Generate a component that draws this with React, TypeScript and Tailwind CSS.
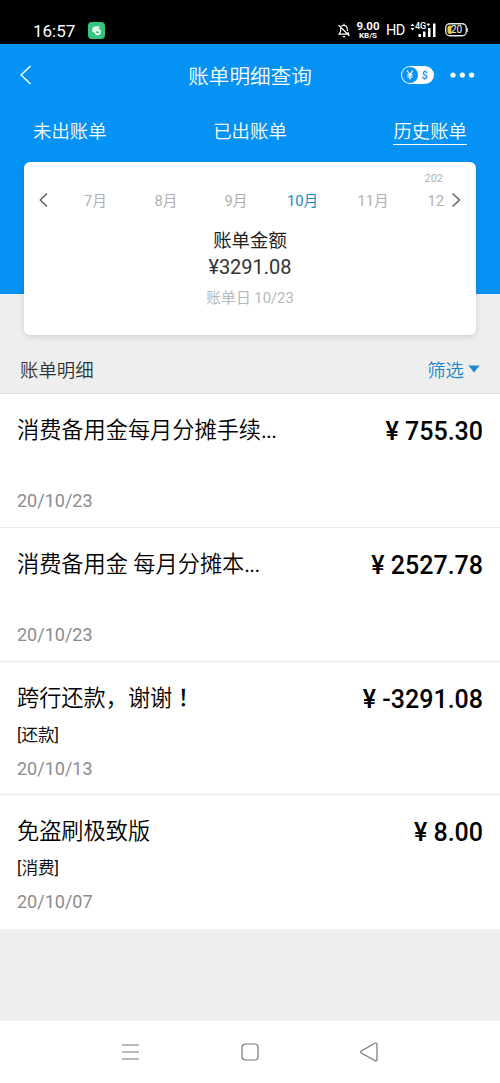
interface BillItem {
  title: string;
  mark?: string;
  amount: string;
  kind?: string;
  date: string;
}

const TABS = ['未出账单', '已出账单', '历史账单'];

const ITEMS: BillItem[] = [
  { title: '消费备用金每月分摊手续', mark: '...', amount: '755.30', date: '20/10/23' },
  { title: '消费备用金 每月分摊本', mark: '...', amount: '2527.78', date: '20/10/23' },
  { title: '跨行还款，谢谢', mark: '！', amount: '-3291.08', kind: '[还款]', date: '20/10/13' },
  { title: '免盗刷极致版', amount: '8.00', kind: '[消费]', date: '20/10/07' },
];

function StatusBar() {
  return (
    <div className="flex h-11 items-end justify-between bg-black pr-8 pl-[33px] text-white">
      <div className="mb-1 flex h-5 items-center gap-3">
        <span className="w-[43px] pt-px text-[17px] leading-5">16:57</span>
        <svg width="17" height="17" viewBox="0 0 17 17">
          <rect width="17" height="17" rx="4" fill="#35c57c" />
          <path d="M4.4 10.2V7.5Q4.4 4.6 7.3 4.6H12L10.6 6.4H8.5Q6.4 7.2 6.2 10.2Z" fill="#fff" />
          <circle cx="9.6" cy="10" r="2.4" fill="none" stroke="#fff" strokeWidth="1.6" />
          <path d="M9.4 10L11 8.4" stroke="#fff" strokeWidth="1" />
        </svg>
      </div>
      <div className="mb-1 flex h-5 items-center">
        <svg width="12" height="15" viewBox="0 0 12 15" fill="none" stroke="#fff" strokeWidth="1.2" strokeLinecap="round">
          <path d="M6 1V2.2M3.8 3Q6 1.4 8.3 3.3Q9.4 4.5 9.4 7.5M2.6 5V8.5L1 11.2H9.5M10.8 11L10 9.5M1 2.5L11 12.5M5.2 13.7H6.8" />
        </svg>
        <div className="ml-1.5 flex w-6 flex-col items-center pt-[2px] font-bold">
          <span className="text-[11.5px] leading-[9px]">9.00</span>
          <span className="text-[8px] leading-[9px]">KB/S</span>
        </div>
        <span className="ml-[6px] w-[18px] pt-px text-[14.5px] leading-5 tracking-[-0.5px]">HD</span>
        <div className="relative ml-[6px] h-4 w-[27px]">
          <span className="absolute top-0 left-[5px] text-[9px] leading-[9px] font-medium">4G</span>
          <svg className="absolute inset-0" width="27" height="16" viewBox="0 0 27 16" fill="#fff">
            <path d="M0.5 4L2.5 1.5L4.5 4ZM0.5 6L2.5 8.5L4.5 6Z" />
            <path d="M16.8 2.5H19.8M18.3 1V4" stroke="#fff" strokeWidth="1" />
            <rect x="8.5" y="12" width="2.5" height="3" />
            <rect x="13" y="9.5" width="2.5" height="5.5" />
            <rect x="18" y="6" width="2.5" height="9" />
            <rect x="23" y="1.5" width="2.5" height="13.5" />
          </svg>
        </div>
        <svg className="ml-2" width="23" height="14" viewBox="0 0 23 14">
          <rect x="0.75" y="0.75" width="20.5" height="12" rx="4" fill="none" stroke="#e8e8e8" strokeWidth="1.3" />
          <path d="M22.3 5V9" stroke="#e8e8e8" strokeWidth="1" />
          <path d="M5 2.5H6.5V11H5Q2.5 11 2.5 8.5V5Q2.5 2.5 5 2.5Z" fill="#f5c842" />
          <text x="11.5" y="10.3" fontSize="10" fill="#fff" textAnchor="middle">20</text>
        </svg>
      </div>
    </div>
  );
}

function Header() {
  return (
    <header className="h-[250px] bg-[#0492f4] text-white">
      <div className="flex h-[62px] items-center pr-[26px] pl-5">
        <div className="flex-1">
          <svg width="12" height="20" viewBox="0 0 12 20" fill="none" stroke="#fff" strokeWidth="1.5">
            <path d="M10.5 1L1 10L10.5 19" />
          </svg>
        </div>
        <h1 className="mr-[-6px] pt-[3px] text-[20.6px] leading-7 font-[350]">账单明细查询</h1>
        <div className="flex flex-1 items-center justify-end gap-4">
          <svg width="33" height="18" viewBox="0 0 33 18">
            <rect width="33" height="18" rx="9" fill="#fff" />
            <circle cx="9" cy="9" r="8" fill="#0492f4" />
            <path d="M6 4.5L9 8.5L12 4.5M9 8.5V13.5M6.3 8.8H11.7M6.3 11H11.7" fill="none" stroke="#fff" strokeWidth="1.2" />
            <text x="23.7" y="12.8" fontSize="10.5" fontWeight="500" fill="#0492f4" textAnchor="middle">$</text>
          </svg>
          <svg className="mr-[-1px]" width="25" height="6" viewBox="0 0 25 6" fill="#fff">
            <circle cx="3" cy="3" r="2.6" />
            <circle cx="12.3" cy="3" r="2.6" />
            <circle cx="21.6" cy="3" r="2.6" />
          </svg>
        </div>
      </div>
      <nav className="flex justify-between px-[33px] pt-[13px]">
        {TABS.map((tab) => (
          <span
            key={tab}
            className={`h-[26px] border-b text-[18.4px] leading-[26px] font-[350] ${
              tab === '历史账单' ? 'border-white' : 'border-transparent'
            }`}
          >
            {tab}
          </span>
        ))}
      </nav>
    </header>
  );
}

function SummaryCard() {
  return (
    <section className="relative mx-6 -mt-[132px] h-[173px] shrink-0 rounded-md bg-white pt-[9px] text-center shadow-[0_2px_6px_rgba(0,0,0,0.12)]">
      <div className="flex h-4 justify-end pr-[33px] text-[11px] leading-4 text-[#b0b0b0]">202</div>
      <div className="flex h-[26px] items-center text-[14.7px] leading-[26px] text-[#b0b0b0]">
        <svg className="ml-[15px] shrink-0" width="9" height="14" viewBox="0 0 9 14" fill="none" stroke="#555" strokeWidth="1.3">
          <path d="M8 0.5L1.2 7L8 13.5" />
        </svg>
        <div className="flex pt-px whitespace-nowrap">
          <span className="ml-9 w-[23px]">7月</span>
          <span className="ml-[47.5px] w-[23px]">8月</span>
          <span className="ml-[47px] w-[23px]">9月</span>
          <span className="ml-[39px] w-8 text-[#1989c4]">10月</span>
          <span className="ml-[38.5px] w-8">11月</span>
          <span className="ml-[38.5px] w-4 overflow-hidden text-left">12</span>
        </div>
        <svg className="ml-[7px] shrink-0" width="10" height="14" viewBox="0 0 10 14" fill="none" stroke="#555" strokeWidth="1.3">
          <path d="M1.5 0.5L8.5 7L1.5 13.5" />
        </svg>
      </div>
      <div className="mt-[14px] text-[18.4px] leading-7 text-[#222]">账单金额</div>
      <div className="-mt-[2px] text-[20px] leading-7 text-[#333]">¥3291.08</div>
      <div className="mt-[5px] text-[14.8px] leading-6 text-[#b8b8b8]">账单日 10/23</div>
    </section>
  );
}

function BillRow({ item }: { item: BillItem }) {
  return (
    <li className="h-[133.8px] border-b border-[#ececec] bg-white px-[17px] pt-5 last:border-b-0">
      <div className="flex h-[35px] justify-between text-black">
        <span className="text-[22.2px] leading-8 font-[350]">
          {item.title}
          {item.mark && (
            <span
              className={
                item.mark === '！'
                  ? "leading-[0] font-medium font-['Noto_Sans_CJK_TC',sans-serif]"
                  : 'font-normal tracking-[-0.8px]'
              }
            >
              {item.mark}
            </span>
          )}
        </span>
        <span className="pt-[2px] text-[25px] leading-8 font-medium">¥ {item.amount}</span>
      </div>
      <div className="mt-[7px] h-6 text-[16.6px] leading-6 text-[#111]">{item.kind}</div>
      <div className="mt-[9px] text-[18px] leading-6 text-[#8c8c8c]">{item.date}</div>
    </li>
  );
}

function SystemNav() {
  return (
    <div className="flex h-[62px] items-center justify-between bg-white pr-[122px] pl-[121px]">
      <svg width="19" height="18" viewBox="0 0 19 18" stroke="#777" strokeWidth="1.2">
        <path d="M1 2H18M1 9H18M1 16H18" />
      </svg>
      <svg width="18" height="18" viewBox="0 0 18 18" fill="none" stroke="#777" strokeWidth="1.2">
        <rect x="1" y="1" width="16" height="16" rx="3.5" />
      </svg>
      <svg width="18" height="20" viewBox="0 0 18 20" fill="none" stroke="#777" strokeWidth="1.2" strokeLinejoin="round">
        <path d="M1.3 9L14.8 1.2Q17 0.5 17 2.5V17.5Q17 19.5 14.8 18.6L1.3 11Q0.3 10 1.3 9Z" />
      </svg>
    </div>
  );
}

export default function App() {
  return (
    <div className="flex h-[1083px] w-[500px] flex-col overflow-hidden bg-[#eeeeee] font-['Roboto','Noto_Sans_CJK_SC',sans-serif]">
      <StatusBar />
      <Header />
      <SummaryCard />
      <div className="flex h-[59px] shrink-0 items-center justify-between border-b border-[#dedede] pt-[13px] pr-5 pl-5">
        <h2 className="text-[18.4px] leading-7 font-[350] text-[#333]">账单明细</h2>
        <div className="flex items-center gap-1 text-[18.4px] leading-7 font-[350] text-[#1a86d0]">
          筛选
          <svg className="-mt-1" width="12" height="8" viewBox="0 0 12 8" fill="#1a86d8">
            <path d="M0.5 0.5H11.5L6 7.5Z" />
          </svg>
        </div>
      </div>
      <ul className="grow">
        {ITEMS.map((item) => (
          <BillRow key={item.title} item={item} />
        ))}
      </ul>
      <SystemNav />
    </div>
  );
}
